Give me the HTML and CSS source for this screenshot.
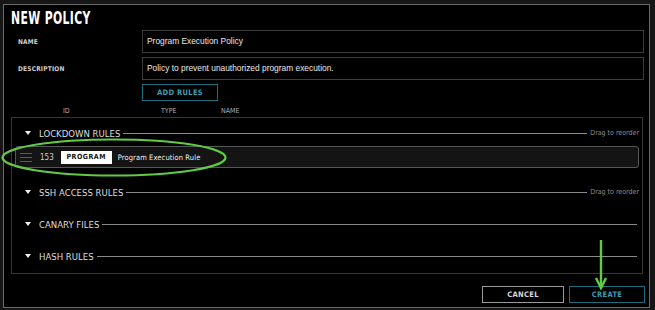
FILE: index.html
```html
<!DOCTYPE html>
<html lang="en">
<head>
    <meta charset="UTF-8">
    <title>New Policy</title>
    <link rel="stylesheet" href="styles.css">
</head>
<body>
    <div class="dialog">
        <h1 class="title"><span class="title-text">NEW POLICY</span></h1>

        <div class="field">
            <label class="label">NAME</label>
            <div class="input">Program Execution Policy</div>
        </div>
        <div class="field">
            <label class="label">DESCRIPTION</label>
            <div class="input">Policy to prevent unauthorized program execution.</div>
        </div>
        <div class="add-row">
            <button class="btn btn-teal add-btn">ADD RULES</button>
        </div>

        <div class="cols">
            <span class="col-id">ID</span>
            <span class="col-type">TYPE</span>
            <span class="col-name">NAME</span>
        </div>

        <div class="rules">
            <div class="section">
                <div class="section-head">
                    <span class="caret"></span>
                    <span class="section-title">LOCKDOWN RULES</span>
                    <span class="line"></span>
                    <span class="hint">Drag to reorder</span>
                </div>
                <div class="rule">
                    <div class="handle">
                        <div class="handle-line"></div>
                        <div class="handle-line"></div>
                        <div class="handle-line"></div>
                    </div>
                    <span class="rule-id">153</span>
                    <span class="badge">PROGRAM</span>
                    <span class="rule-name">Program Execution Rule</span>
                </div>
            </div>
            <div class="section">
                <div class="section-head">
                    <span class="caret"></span>
                    <span class="section-title">SSH ACCESS RULES</span>
                    <span class="line"></span>
                    <span class="hint">Drag to reorder</span>
                </div>
            </div>
            <div class="section">
                <div class="section-head">
                    <span class="caret"></span>
                    <span class="section-title">CANARY FILES</span>
                    <span class="line"></span>
                </div>
            </div>
            <div class="section">
                <div class="section-head">
                    <span class="caret"></span>
                    <span class="section-title">HASH RULES</span>
                    <span class="line"></span>
                </div>
            </div>
        </div>

        <div class="actions">
            <button class="btn btn-grey cancel-btn">CANCEL</button>
            <button class="btn btn-teal create-btn">CREATE</button>
        </div>
    </div>

    <!-- green markup drawn on top of the screenshot -->
    <svg class="annot" width="655" height="310" viewBox="0 0 655 310">
        <ellipse cx="114" cy="157.5" rx="111.5" ry="18" fill="none" stroke="#62cc45" stroke-width="2.2"/>
        <path d="M601 240 L601 287" stroke="#62cc45" stroke-width="2.4" fill="none"/>
        <path d="M596 278 L601 288 L606 278" stroke="#62cc45" stroke-width="2.4" fill="none" stroke-linejoin="miter"/>
    </svg>
</body>
</html>
```

FILE: styles.css
```css
*{
    margin:0;
    padding:0;
    box-sizing: border-box;
}
body{
    background-color: #161616;
    color: #e6e6e6;
    font-family: "DejaVu Sans Condensed", "Liberation Sans", sans-serif;
    padding: 4px 0 0 3px;
    position: relative;
    width: 655px;
    height: 310px;
    overflow: hidden;
}
.dialog{
    width: 647px;
    height: 304px;
    background-color: #000;
    border: 1px solid #6a6a6a;
    padding: 3px 5px 0 0;
}
.title{
    font-size: 17px;
    line-height: 20px;
    font-weight: bold;
    color: #fff;
    padding-left: 7px;
}
.title-text{
    display: inline-block;
    transform: scaleX(0.71);
    transform-origin: left center;
    letter-spacing: 0.5px;
}

/* form */
.field{
    display: flex;
    align-items: center;
    margin-top: 2px;
}
.field + .field{
    margin-top: 4px;
}
.label{
    width: 138px;
    padding-left: 14px;
    font-size: 6.5px;
    font-weight: bold;
    letter-spacing: 0.2px;
    color: #cfcfcf;
}
.input{
    flex: 1;
    height: 23px;
    border: 1px solid #3c3c3c;
    font-family: "Liberation Sans", Arial, sans-serif;
    font-size: 8.4px;
    line-height: 21px;
    padding-left: 4px;
    color: #e8e8e8;
}
.add-row{
    display: flex;
    padding-left: 138px;
    margin-top: 4px;
}
.btn{
    background-color: transparent;
    font-family: inherit;
    font-weight: bold;
    font-size: 7.5px;
    letter-spacing: 0.3px;
    height: 17px;
    cursor: pointer;
}
.btn-teal{
    border: 1px solid #1d6f80;
    color: #3d9db2;
}
.btn-grey{
    border: 1px solid #9a9a9a;
    color: #d8d8d8;
}
.add-btn{
    width: 76px;
}
.cols{
    display: flex;
    height: 12px;
    margin-top: 4px;
    font-size: 7px;
    line-height: 12px;
    color: #b0b0b0;
}
.col-id{
    margin-left: 59px;
    width: 98px;
}
.col-type{
    width: 60px;
}

/* rules */
.rules{
    margin-left: 7px;
    margin-right: 1px;
    height: 157px;
    border: 1px solid #363636;
    padding-top: 7px;
}
.section + .section{
    margin-top: 16px;
}
.section-head{
    display: flex;
    align-items: center;
    height: 16px;
    padding: 0 3px 0 13px;
}
.caret{
    width: 0;
    height: 0;
    border-left: 3.5px solid transparent;
    border-right: 3.5px solid transparent;
    border-top: 4px solid #eee;
    margin-right: 8px;
}
.section-title{
    font-size: 9.5px;
    color: #dedede;
}
.line{
    flex: 1;
    height: 1px;
    background-color: #8a8a8a;
    margin: 0 2px 0 3px;
}
.hint{
    font-size: 7px;
    color: #8c8c8c;
    margin-left: 1px;
}
.rule{
    display: flex;
    align-items: center;
    height: 22px;
    margin: 5px 3px 0 3px;
    background-color: #141414;
    border: 1px solid #575757;
    border-radius: 3px;
    padding-left: 4px;
}
.handle{
    width: 12px;
}
.handle-line{
    height: 1px;
    background-color: #5a5a5a;
    margin: 3px 0;
}
.rule-id{
    font-size: 8px;
    color: #cfcfcf;
    margin-left: 8px;
}
.badge{
    background-color: #fff;
    color: #111;
    font-size: 7px;
    font-weight: bold;
    letter-spacing: 0.5px;
    width: 51px;
    height: 13px;
    line-height: 13px;
    text-align: center;
    margin-left: 7px;
}
.rule-name{
    font-size: 7.5px;
    letter-spacing: 0.1px;
    color: #ececec;
    margin-left: 6px;
}

/* footer */
.actions{
    display: flex;
    justify-content: flex-end;
    gap: 5px;
    margin-top: 12px;
    margin-right: -1px;
}
.cancel-btn{
    width: 82px;
}
.create-btn{
    width: 76px;
}
.annot{
    position: absolute;
    left: 0;
    top: 0;
    pointer-events: none;
}
```
